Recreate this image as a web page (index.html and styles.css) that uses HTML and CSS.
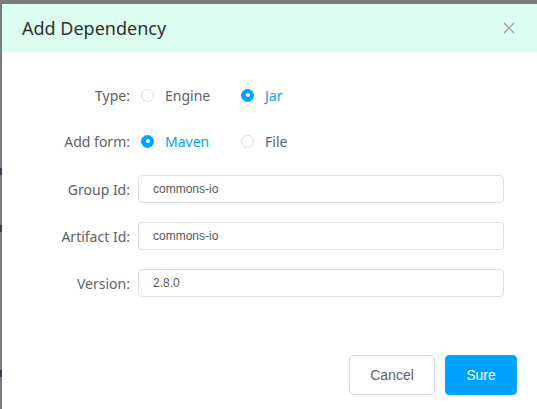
FILE: index.html
```html
<!DOCTYPE html>
<html>
<head>
<meta charset="utf-8">
<link rel="stylesheet" href="styles.css">
</head>
<body>
<div class="overlay">
  <div class="dialog">
    <div class="dialog-header">
      <span class="dialog-title">Add Dependency</span>
      <svg class="close" width="12" height="12" viewBox="0 0 12 12"><path d="M1 1L11 11M11 1L1 11" stroke="#9a9a9a" stroke-width="1.2" fill="none"/></svg>
    </div>
    <div class="dialog-body">
      <div class="row radio-row">
        <label class="label">Type:</label>
        <div class="radios">
          <span class="radio"><span class="dot"></span><span class="rtext">Engine</span></span>
          <span class="radio checked"><span class="dot"></span><span class="rtext">Jar</span></span>
        </div>
      </div>
      <div class="row radio-row radio-row-last">
        <label class="label">Add form:</label>
        <div class="radios">
          <span class="radio checked"><span class="dot"></span><span class="rtext">Maven</span></span>
          <span class="radio"><span class="dot"></span><span class="rtext">File</span></span>
        </div>
      </div>
      <div class="row">
        <label class="label">Group Id:</label>
        <input class="input" value="commons-io">
      </div>
      <div class="row">
        <label class="label">Artifact Id:</label>
        <input class="input" value="commons-io">
      </div>
      <div class="row">
        <label class="label">Version:</label>
        <input class="input" value="2.8.0">
      </div>
    </div>
    <div class="dialog-footer">
      <button class="btn btn-cancel">Cancel</button>
      <button class="btn btn-primary">Sure</button>
    </div>
  </div>
</div>
</body>
</html>
```
FILE: styles.css
```css
html, body {
  margin: 0;
  padding: 0;
  height: 100%;
  overflow: hidden;
}
body {
  font-family: "Noto Sans", "Open Sans", sans-serif;
  background: #7b7b7b;
}
.overlay {
  height: 100%;
  padding: 4px 0 0 2px;
  box-sizing: border-box;
  background: linear-gradient(to bottom,
    #7b7b7b 0, #7b7b7b 168px, #3c3a55 168px, #3c3a55 175px,
    #7b7b7b 175px, #7b7b7b 225px, #3c3a55 225px, #3c3a55 232px,
    #7b7b7b 232px, #7b7b7b 370px, #3c3a55 370px, #3c3a55 377px,
    #7b7b7b 377px);
}
.dialog {
  background: #fff;
  height: 100%;
}
.dialog-header {
  height: 48px;
  background: #dcfdef;
  display: flex;
  align-items: center;
  justify-content: space-between;
  padding: 0 22px 0 20px;
}
.dialog-title {
  font-size: 18px;
  color: #303133;
  margin-top: -1px;
}
.close {
  display: block;
}
.dialog-body {
  padding: 29px 33px 0 0;
  display: flex;
  flex-direction: column;
  gap: 19px;
}
.row {
  display: flex;
  align-items: center;
  height: 28px;
}
.radio-row {
  margin-bottom: -1px;
}
.radio-row-last {
  margin-bottom: 1px;
}
.label {
  width: 128px;
  text-align: right;
  font-size: 14px;
  color: #606266;
  padding-right: 8px;
  flex: none;
}
.radios {
  display: flex;
  padding-left: 3px;
}
.radio {
  display: flex;
  align-items: center;
  width: 100px;
  font-size: 14px;
  color: #606266;
}
.dot {
  width: 11px;
  height: 11px;
  border: 1px solid #dcdfe6;
  border-radius: 50%;
  margin-right: 11px;
  box-sizing: content-box;
  position: relative;
  flex: none;
}
.radio.checked .dot {
  background: #00a2ff;
  border-color: #00a2ff;
}
.radio.checked .dot::after {
  content: "";
  position: absolute;
  width: 4px;
  height: 4px;
  border-radius: 50%;
  background: #fff;
  left: 3.5px;
  top: 3.5px;
}
.radio.checked .rtext {
  color: #00a2ff;
}
.input {
  flex: 1;
  height: 28px;
  box-sizing: border-box;
  border: 1px solid #dcdfe6;
  border-radius: 4px;
  padding: 0 14px;
  font-family: "Liberation Sans", Arial, sans-serif;
  font-size: 12px;
  color: #5a5a5a;
  outline: none;
  background: #fff;
}
.dialog-footer {
  display: flex;
  justify-content: flex-end;
  gap: 10px;
  padding: 58px 20px 0 0;
}
.btn {
  height: 40px;
  border-radius: 4px;
  font-family: "Liberation Sans", Arial, sans-serif;
  font-size: 14px;
  cursor: pointer;
}
.btn-cancel {
  width: 86px;
  background: #fff;
  border: 1px solid #dcdfe6;
  color: #606266;
}
.btn-primary {
  width: 72px;
  background: #00a2ff;
  border: 1px solid #00a2ff;
  color: #fff;
}
```
